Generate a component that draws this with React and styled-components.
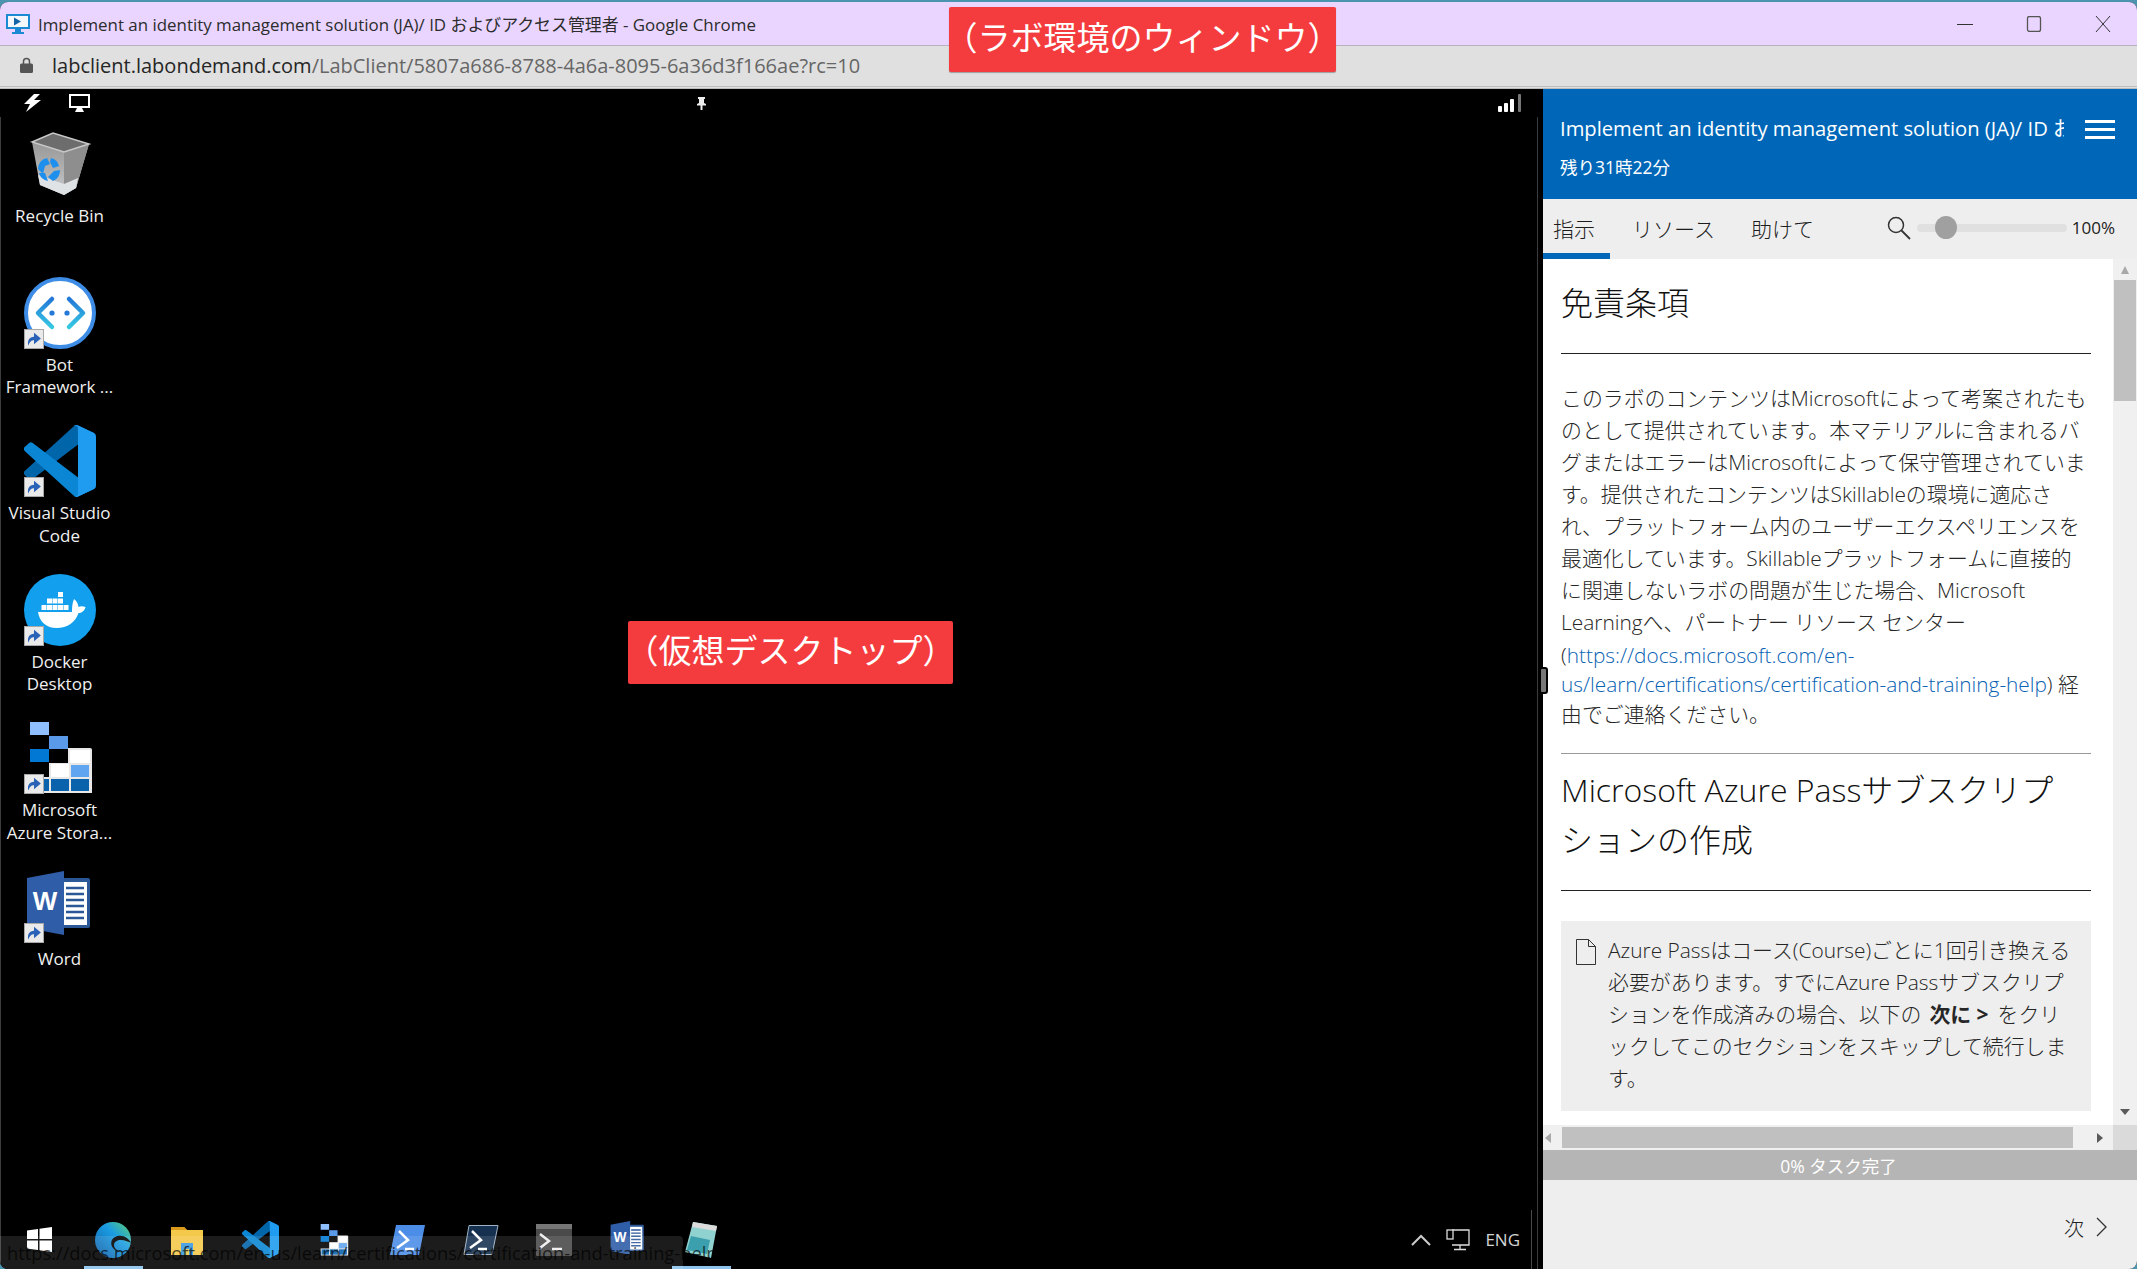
import React from "react"
import styled, { createGlobalStyle } from "styled-components"

const FONT = `"Open Sans", "Noto Sans CJK JP", sans-serif`

const GlobalStyle = createGlobalStyle`
  html, body {
    margin: 0;
    padding: 0;
    background: #4a94b0;
  }
  * {
    box-sizing: border-box;
  }
`

// logos, used on the desktop and again in the taskbar
const VsCodeLogo = ({ size = 72 }) => (
  <svg width={size} height={size} viewBox="0 0 100 100">
    <path fill="#0065a9" d="M96.5 10.8 75.9.9a6.2 6.2 0 0 0-7.1 1.2L1.3 63.6a4.2 4.2 0 0 0 0 6.2l5.5 5a4.2 4.2 0 0 0 5.3.2l81.3-61.7c2.7-2.1 6.7-.1 6.7 3.3v-.2c0-2.4-1.4-4.6-3.6-5.6Z" />
    <path fill="#0a86d4" d="M96.5 89.2 75.9 99.1a6.2 6.2 0 0 1-7.1-1.2L1.3 36.4a4.2 4.2 0 0 1 0-6.2l5.5-5a4.2 4.2 0 0 1 5.3-.2l81.3 61.7c2.7 2.1 6.7.1 6.7-3.3v.2c0 2.4-1.4 4.6-3.6 5.6Z" />
    <path fill="#1f9cf0" d="M75.9 99.1a6.2 6.2 0 0 1-7.2-1.2c2.3 2.3 6.3.7 6.3-2.6V4.7c0-3.3-4-4.9-6.3-2.6a6.2 6.2 0 0 1 7.2-1.2l20.6 9.9c2.1 1 3.5 3.2 3.5 5.6v67.2c0 2.4-1.4 4.6-3.5 5.6Z" />
  </svg>
)

const StorageLogo = ({ size = 72 }) => (
  <svg width={size} height={size} viewBox="0 0 72 72">
    <rect x="6" y="0" width="19" height="13" fill="#8fbfff" />
    <rect x="25" y="14" width="19" height="13" fill="#5a9ae8" />
    <rect x="6" y="27" width="19" height="13" fill="#0078d4" />
    <path d="M44 26h22a2 2 0 0 1 2 2v43H6V55h19V41h19Z" fill="#e8e8e8" />
    <rect x="46" y="28" width="20" height="13" fill="#fff" />
    <rect x="27" y="42" width="18" height="13" fill="#fff" />
    <rect x="47" y="43" width="18" height="12" fill="#60a5f0" />
    <rect x="8" y="57" width="17" height="12" fill="#0a62ad" />
    <rect x="27" y="57" width="18" height="12" fill="#0a62ad" />
    <rect x="47" y="57" width="18" height="12" fill="#0a62ad" />
  </svg>
)

const WordLogo = ({ size = 72 }) => (
  <svg width={size} height={size} viewBox="0 0 72 72">
    <rect x="30" y="7" width="36" height="50" rx="2" fill="#2b5797" />
    <rect x="37" y="11" width="26" height="43" fill="#fff" />
    <path d="M42 17h18M42 23h18M42 29h18M42 35h18M42 41h18M42 47h18" stroke="#2b5797" strokeWidth="2.6" />
    <path d="M3 7 40 0v64L3 57Z" fill="#2f5da8" />
    <text x="21" y="39" fontFamily="Liberation Sans, sans-serif" fontSize="26" fontWeight="700" fill="#fff" textAnchor="middle">W</text>
  </svg>
)

const RecycleBinLogo = () => (
  <svg width="72" height="72" viewBox="0 0 72 72">
    <defs>
      <linearGradient id="binSide" x1="0" x2="0" y1="0" y2="1">
        <stop offset="0" stopColor="#8f8f8f" />
        <stop offset="0.65" stopColor="#b4b4b4" />
        <stop offset="1" stopColor="#c8cbce" />
      </linearGradient>
    </defs>
    <path d="M8 14 29 5l36 11-13 44-12 7-24-10Z" fill="url(#binSide)" />
    <path d="M40 24 65 16 52 60 40 67Z" fill="#8e8e8e" />
    <path d="M8 14 29 5l36 11-25 8Z" fill="#6d6d6d" stroke="#c8c8c8" strokeWidth="1.5" />
    <path d="M14 47 40 56l14-6-2 10-12 7-24-10Z" fill="#dfe3e6" />
    <g fill="#1f8fee" transform="translate(-10 3)">
      <path d="M24 38a11 11 0 0 1 9-11l3 6-5 2-2 8Z" />
      <path d="M37 27a11 11 0 0 1 8 8l-6 2-3-6Z" />
      <path d="M46 39a11 11 0 0 1-7 11l-5-4 6-6Z" />
      <path d="M25 42l6 0 3 8a11 11 0 0 1-9-8Z" />
    </g>
  </svg>
)

const BotLogo = () => (
  <svg width="72" height="72" viewBox="0 0 72 72">
    <defs>
      <linearGradient id="botStroke" x1="0" x2="0" y1="0" y2="1">
        <stop offset="0" stopColor="#2378d8" />
        <stop offset="1" stopColor="#35c8e2" />
      </linearGradient>
    </defs>
    <circle cx="36" cy="36" r="34" fill="#fff" stroke="#3d8de6" strokeWidth="4" />
    <path d="M28 22 14 36l14 14M45 22l14 14-14 14" fill="none" stroke="url(#botStroke)" strokeWidth="4.5" strokeLinecap="round" strokeLinejoin="round" />
    <circle cx="28" cy="36" r="2.6" fill="#2378d8" />
    <circle cx="43" cy="36" r="2.6" fill="#2378d8" />
  </svg>
)

const DockerLogo = () => (
  <svg width="72" height="72" viewBox="0 0 72 72">
    <circle cx="36" cy="36" r="36" fill="#12a0ee" />
    <g fill="#fff">
      <rect x="34" y="18" width="5" height="5" />
      <rect x="23" y="24.5" width="5" height="5" />
      <rect x="28.5" y="24.5" width="5" height="5" />
      <rect x="34" y="24.5" width="5" height="5" />
      <rect x="17.5" y="31" width="5" height="5" />
      <rect x="23" y="31" width="5" height="5" />
      <rect x="28.5" y="31" width="5" height="5" />
      <rect x="34" y="31" width="5" height="5" />
      <rect x="39.5" y="31" width="5" height="5" />
      <path d="M14 38h34c0-4 0-8 2-13 3 2 4 5 4.500 8 2-1 4-1 7 0-1 4-4 6-7 6-3 9-11 15-22 15-10 0-17-6-18.500-16Z" />
    </g>
  </svg>
)

const ShortcutBadge = styled.span`
  position: absolute;
  left: 0;
  bottom: 0;
  width: 20px;
  height: 20px;
  background: #eaeaea;
  border: 1px solid #a8a8a8;
  display: flex;
  align-items: center;
  justify-content: center;
`

const Shortcut = () => (
  <ShortcutBadge>
    <svg width="16" height="16" viewBox="0 0 14 14">
      <path d="M2 13c-1-5 1-8 5-8V1.500l6 5-6 5V8c-2 0-4 1-5 5Z" fill="#2a62b8" />
    </svg>
  </ShortcutBadge>
)

const DESKTOP_ICONS = [
  { id: "bin", logo: <RecycleBinLogo />, label: ["Recycle Bin"] },
  { id: "bot", logo: <BotLogo />, label: ["Bot", "Framework ..."], shortcut: true },
  { id: "code", logo: <VsCodeLogo />, label: ["Visual Studio", "Code"], shortcut: true },
  { id: "docker", logo: <DockerLogo />, label: ["Docker", "Desktop"], shortcut: true },
  { id: "storage", logo: <StorageLogo />, label: ["Microsoft", "Azure Stora..."], shortcut: true },
  { id: "word", logo: <WordLogo />, label: ["Word"], shortcut: true },
]

const DISCLAIMER = [
  "このラボのコンテンツはMicrosoftによって考案されたも",
  "のとして提供されています。本マテリアルに含まれるバ",
  "グまたはエラーはMicrosoftによって保守管理されていま",
  "す。提供されたコンテンツはSkillableの環境に適応さ",
  "れ、プラットフォーム内のユーザーエクスペリエンスを",
  "最適化しています。Skillableプラットフォームに直接的",
  "に関連しないラボの問題が生じた場合、Microsoft",
  "Learningへ、パートナー リソース センター",
]

const Frame = styled.div`
  height: 1269px;
  padding-top: 2px;
  overflow: hidden;
`

const Window = styled.div`
  width: 2137px;
  height: 1267px;
  display: flex;
  flex-direction: column;
  border-radius: 8px;
  overflow: hidden;
  background: #000;
  font-family: ${FONT};
  position: relative;
`

const TitleBar = styled.div`
  height: 44px;
  flex: none;
  display: flex;
  align-items: center;
  padding: 0 26px 0 6px;
  background: #e9d5ff;
  border-bottom: 1px solid #b8b2bc;
  color: #2c2c2c;
  font-size: 16.900px;
`

const TitleText = styled.span`
  margin-left: 8px;
  flex: 1;
  white-space: nowrap;
`

const WindowControls = styled.div`
  display: flex;
  align-items: center;
  gap: 53px;
`

const AddressBar = styled.div`
  height: 43px;
  flex: none;
  display: flex;
  align-items: center;
  padding: 0 0 2px 20px;
  background: #e0e0e0;
  border-bottom: 3px double #bcbcbc;
  font-size: 20px;
  white-space: nowrap;
`

const Host = styled.span`
  margin-left: 19px;
  color: #262626;
`

const UrlPath = styled.span`
  color: #666;
`

const Main = styled.div`
  flex: 1;
  min-height: 0;
  display: flex;
`

const Desktop = styled.div`
  flex: 1;
  min-width: 0;
  display: flex;
  flex-direction: column;
  background: #000;
  position: relative;
`

const SessionBar = styled.div`
  height: 28px;
  flex: none;
  display: flex;
  align-items: center;
  padding: 0 20px 0 23px;
  gap: 26px;
`

const PinSlot = styled.span`
  margin-left: 580px;
  flex: 1;
  display: flex;
`

const Screen = styled.div`
  flex: 1;
  min-height: 0;
  width: 1538px;
  display: flex;
  flex-direction: column;
  justify-content: space-between;
  border-left: 1px solid #3c3c3c;
  border-right: 1px solid #3c3c3c;
`

const IconColumn = styled.div`
  width: 117px;
  padding-top: 11px;
  display: flex;
  flex-direction: column;
`

const DesktopIcon = styled.div`
  height: 148.500px;
  display: flex;
  flex-direction: column;
  align-items: center;
`

const IconArt = styled.div`
  width: 72px;
  height: 72px;
  position: relative;
  flex: none;
`

const IconLabel = styled.div`
  margin-top: 5px;
  color: #f0f0f0;
  font-size: 17px;
  line-height: 22.500px;
  text-align: center;
  white-space: nowrap;
  text-shadow: 1px 1px 1px #000;
`

const Taskbar = styled.div`
  height: 59px;
  flex: none;
  display: flex;
  align-items: stretch;
  padding-left: 2px;
`

const TaskSlot = styled.div`
  width: 73.500px;
  height: 59px;
  display: flex;
  align-items: center;
  justify-content: center;
  position: relative;
  &::after {
    content: "";
    display: ${p => (p.$active ? "block" : "none")};
    position: absolute;
    left: 7px;
    right: 7px;
    bottom: 0;
    height: 3px;
    background: #8cc4ee;
  }
`

const Tray = styled.div`
  margin-left: auto;
  margin-right: 5px;
  width: 132px;
  display: flex;
  align-items: center;
  justify-content: flex-end;
  color: #d4d4d4;
  font-size: 17px;
  border-right: 1px solid #4a4a4a;
  padding-right: 11px;
  gap: 15px;
`

const StatusTip = styled.div`
  position: absolute;
  left: 0;
  bottom: 0;
  width: 683px;
  height: 33px;
  padding-left: 7px;
  display: flex;
  align-items: center;
  background: rgba(255, 255, 255, 0.11);
  border-top-right-radius: 4px;
  color: rgba(0, 0, 0, 0.7);
  font-size: 18.300px;
  white-space: nowrap;
`

const RedLabel = styled.div`
  position: absolute;
  left: ${p => p.$left}px;
  top: ${p => p.$top}px;
  width: ${p => p.$width}px;
  height: ${p => p.$height}px;
  padding-bottom: 8px;
  display: flex;
  align-items: center;
  justify-content: center;
  background: #f43c3e;
  border-radius: 2px;
  color: #fff;
  font-size: 33px;
  white-space: nowrap;
  box-shadow: 0 1px 1px rgba(0, 0, 0, 0.3);
`

const Panel = styled.div`
  width: 594px;
  flex: none;
  display: flex;
  flex-direction: column;
  background: #eeeeee;
  position: relative;
`

const DragHandle = styled.div`
  position: absolute;
  left: -4px;
  top: 578px;
  width: 9px;
  height: 27px;
  border: 2px solid #000;
  border-radius: 3px;
  background: #777;
`

const PanelHeader = styled.div`
  height: 110px;
  flex: none;
  background: #0067b8;
  color: #fff;
  padding: 24px 22px 0 17px;
  position: relative;
`

const LabTitle = styled.div`
  width: 504px;
  height: 30px;
  line-height: 30px;
  overflow: hidden;
  white-space: nowrap;
  font-size: 20.200px;
`

const TimeLeft = styled.div`
  margin-top: 10px;
  font-size: 17.500px;
  line-height: 28px;
`

const Hamburger = styled.div`
  position: absolute;
  right: 22px;
  top: 31px;
  width: 30px;
  height: 19px;
  display: flex;
  flex-direction: column;
  justify-content: space-between;
  & > span {
    height: 3px;
    background: #fff;
  }
`

const TabBar = styled.div`
  height: 60px;
  flex: none;
  display: flex;
  align-items: stretch;
  padding-right: 22px;
`

const Tab = styled.div`
  height: 60px;
  padding: 4px ${p => p.$padRight || 0}px 0 ${p => p.$padLeft || 0}px;
  margin-right: ${p => p.$gap}px;
  display: flex;
  align-items: center;
  color: #1c1c1c;
  font-size: 21px;
  font-weight: 300;
  border-bottom: 6px solid ${p => (p.$active ? "#0067b8" : "transparent")};
`

const ZoomBox = styled.div`
  margin-left: auto;
  display: flex;
  align-items: center;
  padding-bottom: 3px;
  color: #222;
  font-size: 17px;
`

const SliderTrack = styled.div`
  width: 150px;
  height: 8px;
  margin: 0 5px 0 6px;
  border-radius: 4px;
  background: #e0e0e0;
  position: relative;
`

const SliderThumb = styled.div`
  position: absolute;
  left: 18px;
  top: -8px;
  width: 22px;
  height: 23px;
  border-radius: 50%;
  background: #a0a0a0;
`

const ContentArea = styled.div`
  flex: 1;
  min-height: 0;
  display: flex;
`

const Content = styled.div`
  flex: 1;
  min-width: 0;
  background: #fff;
  padding: 19px 22px 0 18px;
  color: #262626;
  font-weight: 300;
  overflow: hidden;
`

const Heading = styled.div`
  font-size: 32px;
  line-height: 50px;
  color: #111;
  white-space: nowrap;
`

const Rule = styled.div`
  height: 1px;
  background: ${p => p.$color || "#222"};
  margin: ${p => p.$top}px 0 ${p => p.$bottom}px;
`

const TextLine = styled.div`
  height: ${p => p.$h || 32}px;
  line-height: ${p => p.$h || 32}px;
  font-size: 20.900px;
  white-space: nowrap;
`

const Link = styled.span`
  color: #0862b4;
  font-size: 20.800px;
`

const Strong = styled.b`
  font-weight: 700;
  margin: 0 9px 0 8px;
`

const Note = styled.div`
  height: 190px;
  padding: 13px 0 0 15px;
  display: flex;
  background: #eeeeee;
`

const NoteIcon = styled.div`
  width: 32px;
  flex: none;
  padding-top: 5px;
`

const VScroll = styled.div`
  width: 24px;
  flex: none;
  display: flex;
  flex-direction: column;
  align-items: center;
  background: #f0f0f0;
  padding: 6px 0 8px;
`

const VThumb = styled.div`
  width: 22px;
  height: 121px;
  margin-top: 5px;
  margin-bottom: auto;
  background: #c0c0c0;
`

const HScroll = styled.div`
  height: 25px;
  flex: none;
  display: flex;
  align-items: center;
  background: #f0f0f0;
`

const HThumb = styled.div`
  width: 511px;
  height: 21px;
  margin: 0 22px 0 9px;
  background: #c0c0c0;
`

const ScrollCorner = styled.div`
  width: 24px;
  height: 25px;
  margin-left: auto;
  background: #dadada;
`

const Progress = styled.div`
  height: 30px;
  flex: none;
  padding-right: 3px;
  display: flex;
  align-items: center;
  justify-content: center;
  background: #b5b5b5;
  color: #fff;
  font-size: 17.500px;
`

const PanelFooter = styled.div`
  height: 89px;
  flex: none;
  display: flex;
  align-items: center;
  justify-content: flex-end;
  gap: 12px;
  padding: 5px 30px 0 0;
  color: #222;
  font-size: 20px;
  font-weight: 300;
`

const Arrow = ({ dir, fill = "#5a5a5a" }) => {
  const shapes = {
    up: "M1 9 5 1l4 8Z",
    down: "M0 2h10L5 8Z",
    left: "M8 0v10L2 5Z",
    right: "M2 0v10l6-5Z",
  }
  return (
    <svg width="10" height="10" viewBox="0 0 10 10">
      <path d={shapes[dir]} fill={fill} />
    </svg>
  )
}

const App = () => (
  <Frame>
    <GlobalStyle />
    <Window>
      <TitleBar>
        <svg width="24" height="20" viewBox="0 0 24 20">
          <rect x="0" y="0" width="24" height="15" fill="#1b8ad3" />
          <rect x="2" y="2" width="20" height="11" fill="#f4f8fb" />
          <path d="M8 3.500 15 7.500 8 11.500Z" fill="#1464a8" />
          <rect x="9" y="15" width="6" height="3" fill="#1b8ad3" />
          <rect x="6" y="18" width="12" height="2" fill="#1b8ad3" />
        </svg>
        <TitleText>Implement an identity management solution (JA)/ ID およびアクセス管理者 - Google Chrome</TitleText>
        <WindowControls>
          <svg width="16" height="16" viewBox="0 0 16 16">
            <path d="M0 8.500h16" stroke="#333" strokeWidth="1" />
          </svg>
          <svg width="16" height="16" viewBox="0 0 16 16">
            <rect x="1.500" y=".5" width="13" height="15" rx="2" fill="none" stroke="#555" strokeWidth="1.300" />
          </svg>
          <svg width="16" height="16" viewBox="0 0 16 16">
            <path d="M1 0 15 16M15 0 1 16" stroke="#333" strokeWidth="1" />
          </svg>
        </WindowControls>
      </TitleBar>
      <AddressBar>
        <svg width="13" height="16" viewBox="0 0 13 16">
          <path d="M3.500 7V4.500a3 3 0 0 1 6 0V7" fill="none" stroke="#555" strokeWidth="1.500" />
          <rect x="0" y="6.500" width="13" height="9.500" rx="1.500" fill="#555" />
        </svg>
        <Host>labclient.labondemand.com</Host>
        <UrlPath>/LabClient/5807a686-8788-4a6a-8095-6a36d3f166ae?rc=10</UrlPath>
      </AddressBar>
      <Main>
        <Desktop>
          <SessionBar>
            <svg width="20" height="18" viewBox="0 0 20 18">
              <path d="M11 0 1 10h6l-4 8L18 6h-7l6-6Z" fill="#fff" />
            </svg>
            <svg width="21" height="18" viewBox="0 0 21 18">
              <rect x="1" y="1" width="19" height="12" fill="#000" stroke="#fff" strokeWidth="2" />
              <path d="M8 14h5l2 4H6Z" fill="#fff" />
            </svg>
            <PinSlot>
              <svg width="11" height="13" viewBox="0 0 11 13">
                <path d="M2 0h7v2H8v4l2 1v1.500H6.500V13h-2V8.500H1V7l2-1V2H2Z" fill="#eee" />
              </svg>
            </PinSlot>
            <svg width="25" height="18" viewBox="0 0 25 18">
              <rect x="0" y="12" width="4" height="6" rx="1" fill="#fff" />
              <rect x="6" y="9" width="4" height="9" rx="1" fill="#fff" />
              <rect x="12" y="5" width="4" height="13" rx="1" fill="#fff" />
              <rect x="20" y="0" width="3" height="18" rx="1" fill="#777" />
            </svg>
          </SessionBar>
          <Screen>
            <IconColumn>
              {DESKTOP_ICONS.map(icon => (
                <DesktopIcon key={icon.id}>
                  <IconArt>
                    {icon.logo}
                    {icon.shortcut && <Shortcut />}
                  </IconArt>
                  <IconLabel>
                    {icon.label.map(line => (
                      <div key={line}>{line}</div>
                    ))}
                  </IconLabel>
                </DesktopIcon>
              ))}
            </IconColumn>
            <Taskbar>
              <TaskSlot>
                <svg width="25" height="25" viewBox="0 0 25 25">
                  <path d="M0 3.500 11 2v10H0ZM12.500 1.800 25 0v12H12.500ZM0 13.500h11v9.500L0 21.500ZM12.500 13.500H25V25l-12.500-1.800Z" fill="#fff" />
                </svg>
              </TaskSlot>
              <TaskSlot $active>
                <svg width="36" height="38" viewBox="0 0 36 38">
                  <defs>
                    <linearGradient id="edgeRing" x1="0" x2="1" y1="1" y2="0">
                      <stop offset="0" stopColor="#0c59a4" />
                      <stop offset="0.6" stopColor="#1b9de2" />
                      <stop offset="1" stopColor="#5fd06f" />
                    </linearGradient>
                  </defs>
                  <circle cx="18" cy="19" r="18" fill="url(#edgeRing)" />
                  <path d="M36 22c-3-6-10-9-16-6-4 2-5 7-2 11 3 4 9 5 13 3-7 2-12-2-12-6 0-3 3-5 7-5s8 2 10 3Z" fill="#000" />
                </svg>
              </TaskSlot>
              <TaskSlot>
                <svg width="32" height="30" viewBox="0 0 32 30">
                  <path d="M0 2h13l3 3h16v25H0Z" fill="#f4c84b" />
                  <path d="M0 2h13l3 3H0Z" fill="#d99a1c" />
                  <path d="M10 18h12v12H10Z" fill="#3a9ae0" />
                  <path d="M14 24h4v6h-4Z" fill="#f4c84b" />
                </svg>
              </TaskSlot>
              <TaskSlot>
                <VsCodeLogo size={37} />
              </TaskSlot>
              <TaskSlot>
                <StorageLogo size={32} />
              </TaskSlot>
              <TaskSlot>
                <svg width="35" height="30" viewBox="0 0 35 30">
                  <path d="M6 0h29l-6 30H0Z" fill="#4c8de8" />
                  <path d="M9 6l9 9-11 8M15 24h9" fill="none" stroke="#fff" strokeWidth="2.500" />
                </svg>
              </TaskSlot>
              <TaskSlot>
                <svg width="36" height="30" viewBox="0 0 36 30">
                  <path d="M6 .5h29l-6 29H1Z" fill="#16314f" stroke="#9fb4c8" strokeWidth="1" />
                  <path d="M9 6l9 9-11 8M15 24h9" fill="none" stroke="#fff" strokeWidth="2.500" />
                </svg>
              </TaskSlot>
              <TaskSlot>
                <svg width="36" height="32" viewBox="0 0 36 32">
                  <rect width="36" height="32" rx="1" fill="#4a4a4a" />
                  <rect width="36" height="5" fill="#767676" />
                  <path d="M4 10l9 7-9 7M16 25h10" fill="none" stroke="#eee" strokeWidth="2.500" />
                </svg>
              </TaskSlot>
              <TaskSlot>
                <WordLogo size={38} />
              </TaskSlot>
              <TaskSlot $active>
                <svg width="32" height="36" viewBox="0 0 32 36">
                  <path d="M8 0 32 4l-6 32L0 30Z" fill="#8fd2cf" />
                  <path d="M8 0 32 4l-1 5L7 5Z" fill="#dcdcdc" />
                  <path d="M6 14 25 18l-3 14L2 28Z" fill="#3b9fae" />
                </svg>
              </TaskSlot>
              <Tray>
                <svg width="20" height="12" viewBox="0 0 20 12">
                  <path d="M1 11 10 2l9 9" fill="none" stroke="#ccc" strokeWidth="2" />
                </svg>
                <svg width="24" height="22" viewBox="0 0 24 22">
                  <path d="M6 1h17v15H6M14 16v4M8 20.500h12" fill="none" stroke="#ddd" strokeWidth="1.300" />
                  <rect x="1" y="1" width="6" height="9" fill="#000" stroke="#ddd" strokeWidth="1.300" />
                </svg>
                <span>ENG</span>
              </Tray>
            </Taskbar>
          </Screen>
          <RedLabel $left={628} $top={532} $width={325} $height={63}>（仮想デスクトップ）</RedLabel>
          <StatusTip>https://docs.microsoft.com/en-us/learn/certifications/certification-and-training-help</StatusTip>
        </Desktop>
        <Panel>
          <DragHandle />
          <PanelHeader>
            <LabTitle>Implement an identity management solution (JA)/ ID および</LabTitle>
            <TimeLeft>残り31時22分</TimeLeft>
            <Hamburger>
              <span />
              <span />
              <span />
            </Hamburger>
          </PanelHeader>
          <TabBar>
            <Tab $active $padLeft={10} $padRight={15} $gap={22}>指示</Tab>
            <Tab $gap={36}>リソース</Tab>
            <Tab $gap={0}>助けて</Tab>
            <ZoomBox>
              <svg width="24" height="24" viewBox="0 0 24 24">
                <circle cx="9" cy="9" r="7.500" fill="none" stroke="#333" strokeWidth="1.500" />
                <path d="M14.500 14.500 23 23" stroke="#333" strokeWidth="1.800" />
              </svg>
              <SliderTrack>
                <SliderThumb />
              </SliderTrack>
              <span>100%</span>
            </ZoomBox>
          </TabBar>
          <ContentArea>
            <Content>
              <Heading>免責条項</Heading>
              <Rule $top={25} $bottom={28} />
              {DISCLAIMER.map(line => (
                <TextLine key={line}>{line}</TextLine>
              ))}
              <TextLine $h={34}>(<Link>https://docs.microsoft.com/en-</Link></TextLine>
              <TextLine $h={24}><Link>us/learn/certifications/certification-and-training-help</Link>) 経</TextLine>
              <TextLine $h={36}>由でご連絡ください。</TextLine>
              <Rule $color="#999" $top={21} $bottom={11} />
              <Heading>Microsoft Azure Passサブスクリプ</Heading>
              <Heading>ションの作成</Heading>
              <Rule $top={25} $bottom={30} />
              <Note>
                <NoteIcon>
                  <svg width="20" height="26" viewBox="0 0 20 26">
                    <path d="M.5.5h12l7 7v18H.5ZM12.500.5v7h7" fill="none" stroke="#333" strokeWidth="1" />
                  </svg>
                </NoteIcon>
                <div>
                  <TextLine>Azure Passはコース(Course)ごとに1回引き換える</TextLine>
                  <TextLine>必要があります。すでにAzure Passサブスクリプ</TextLine>
                  <TextLine>ションを作成済みの場合、以下の<Strong>次に &gt;</Strong>をクリ</TextLine>
                  <TextLine>ックしてこのセクションをスキップして続行しま</TextLine>
                  <TextLine>す。</TextLine>
                </div>
              </Note>
            </Content>
            <VScroll>
              <Arrow dir="up" fill="#a8a8a8" />
              <VThumb />
              <Arrow dir="down" />
            </VScroll>
          </ContentArea>
          <HScroll>
            <Arrow dir="left" fill="#a8a8a8" />
            <HThumb />
            <Arrow dir="right" />
            <ScrollCorner />
          </HScroll>
          <Progress>0% タスク完了</Progress>
          <PanelFooter>
            <span>次</span>
            <svg width="11" height="20" viewBox="0 0 11 20">
              <path d="M1 1 10 10 1 19" fill="none" stroke="#333" strokeWidth="1.300" />
            </svg>
          </PanelFooter>
        </Panel>
      </Main>
      <RedLabel $left={949} $top={5} $width={387} $height={65}>（ラボ環境のウィンドウ）</RedLabel>
    </Window>
  </Frame>
)

export default App
